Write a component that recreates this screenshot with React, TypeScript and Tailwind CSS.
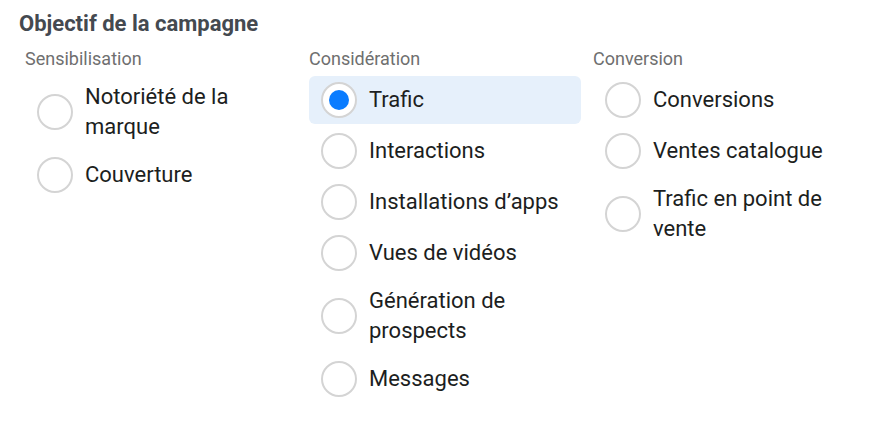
import React from 'react';

type Option = { label: string; selected?: boolean };

const columns: { title: string; options: Option[] }[] = [
  {
    title: 'Sensibilisation',
    options: [{ label: 'Notoriété de la marque' }, { label: 'Couverture' }],
  },
  {
    title: 'Considération',
    options: [
      { label: 'Trafic', selected: true },
      { label: 'Interactions' },
      { label: 'Installations d’apps' },
      { label: 'Vues de vidéos' },
      { label: 'Génération de prospects' },
      { label: 'Messages' },
    ],
  },
  {
    title: 'Conversion',
    options: [
      { label: 'Conversions' },
      { label: 'Ventes catalogue' },
      { label: 'Trafic en point de vente' },
    ],
  },
];

const Radio: React.FC<{ checked?: boolean }> = ({ checked }) => (
  <span className="flex h-9 w-9 shrink-0 items-center justify-center rounded-full border-2 border-[#d4d4d4] bg-white">
    {checked && <span className="h-5 w-5 rounded-full bg-[#0a7cff]" />}
  </span>
);

export default function App() {
  return (
    <div className="h-[430px] w-[892px] bg-white pl-[19px] pt-[9px] font-['Roboto',sans-serif]">
      <h1 className="text-[22px] font-bold leading-[30px] text-[#444950]">Objectif de la campagne</h1>
      <div className="mt-[5px] flex gap-3 pl-[6px]">
        {columns.map((col) => (
          <div key={col.title} className="w-[272px]">
            <div className="text-[18px] leading-[30px] text-[#6f6f6f]">{col.title}</div>
            <div className="mt-[2px] flex flex-col gap-[3px]">
              {col.options.map((opt) => (
                <div
                  key={opt.label}
                  className={`flex items-center gap-3 rounded-md px-3 py-[6px] ${opt.selected ? 'bg-[#e6f0fb]' : ''}`}
                >
                  <Radio checked={opt.selected} />
                  <span className="w-[200px] text-[22px] leading-[30px] text-[#1c1e21]">{opt.label}</span>
                </div>
              ))}
            </div>
          </div>
        ))}
      </div>
    </div>
  );
}
